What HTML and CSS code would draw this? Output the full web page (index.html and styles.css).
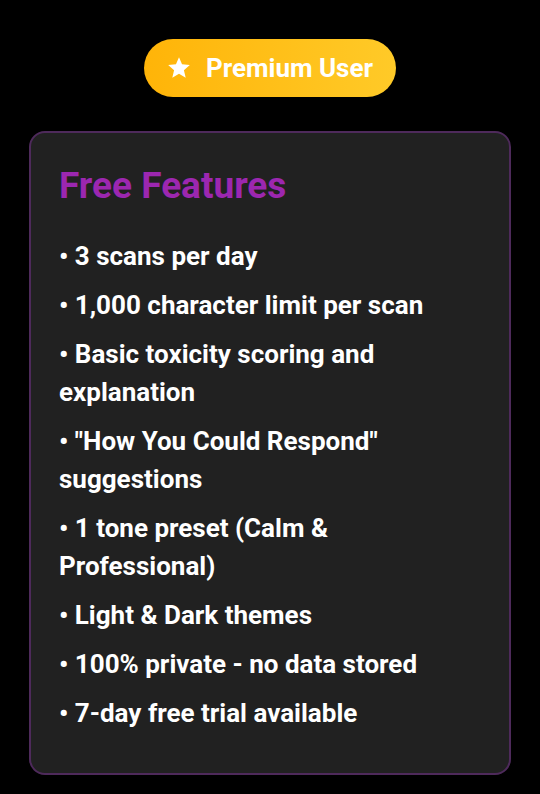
FILE: index.html
```html
<!DOCTYPE html>
<html lang="en">
<head>
    <meta charset="UTF-8">
    <meta name="viewport" content="width=device-width, initial-scale=1.0">
    <title>Free Features</title>
    <link rel="stylesheet" href="styles.css">
</head>
<body>
    <div class="page">
        <div class="badge">
            <svg class="badge-star" viewBox="0 0 24 24" width="26" height="26">
                <path d="M12 17.27L18.18 21l-1.64-7.03L22 9.24l-7.19-.61L12 2 9.19 8.63 2 9.24l5.46 4.73L5.82 21z" fill="#fff"/>
            </svg>
            <span>Premium User</span>
        </div>

        <div class="card">
            <h2 class="card-title">Free Features</h2>
            <ul class="features">
                <li>• 3 scans per day</li>
                <li>• 1,000 character limit per scan</li>
                <li>• Basic toxicity scoring and explanation</li>
                <li>• "How You Could Respond" suggestions</li>
                <li>• 1 tone preset (Calm &amp; Professional)</li>
                <li>• Light &amp; Dark themes</li>
                <li>• 100% private - no data stored</li>
                <li>• 7-day free trial available</li>
            </ul>
        </div>
    </div>
</body>
</html>
```

FILE: styles.css
```css
body {
    margin: 0;
    background-color: #000;
    font-family: Roboto, "Liberation Sans", sans-serif;
}
.page {
    display: flex;
    flex-direction: column;
    align-items: center;
    padding: 39px 29px 20px;
}
.badge {
    display: flex;
    align-items: center;
    gap: 14px;
    height: 58px;
    padding: 0 23px 0 22px;
    border-radius: 29px;
    background: linear-gradient(90deg, #ffb408, #ffca28);
    color: #fff;
    font-size: 26px;
    font-weight: 700;
    box-sizing: border-box;
}
.badge-star {
    display: block;
}
.card {
    margin-top: 34px;
    width: 100%;
    box-sizing: border-box;
    background-color: #212121;
    border: 2px solid #4e2a5b;
    border-radius: 16px;
    padding: 32px 28px 41px;
}
.card-title {
    margin: 0;
    color: #9c27b0;
    font-size: 37px;
    line-height: 42px;
    font-weight: 700;
}
.features {
    list-style: none;
    margin: 30px 0 0;
    padding: 0;
}
.features li {
    color: #fff;
    font-size: 26px;
    line-height: 38px;
    font-weight: 700;
    margin-bottom: 11px;
}
.features li:last-child {
    margin-bottom: 0;
}
```
